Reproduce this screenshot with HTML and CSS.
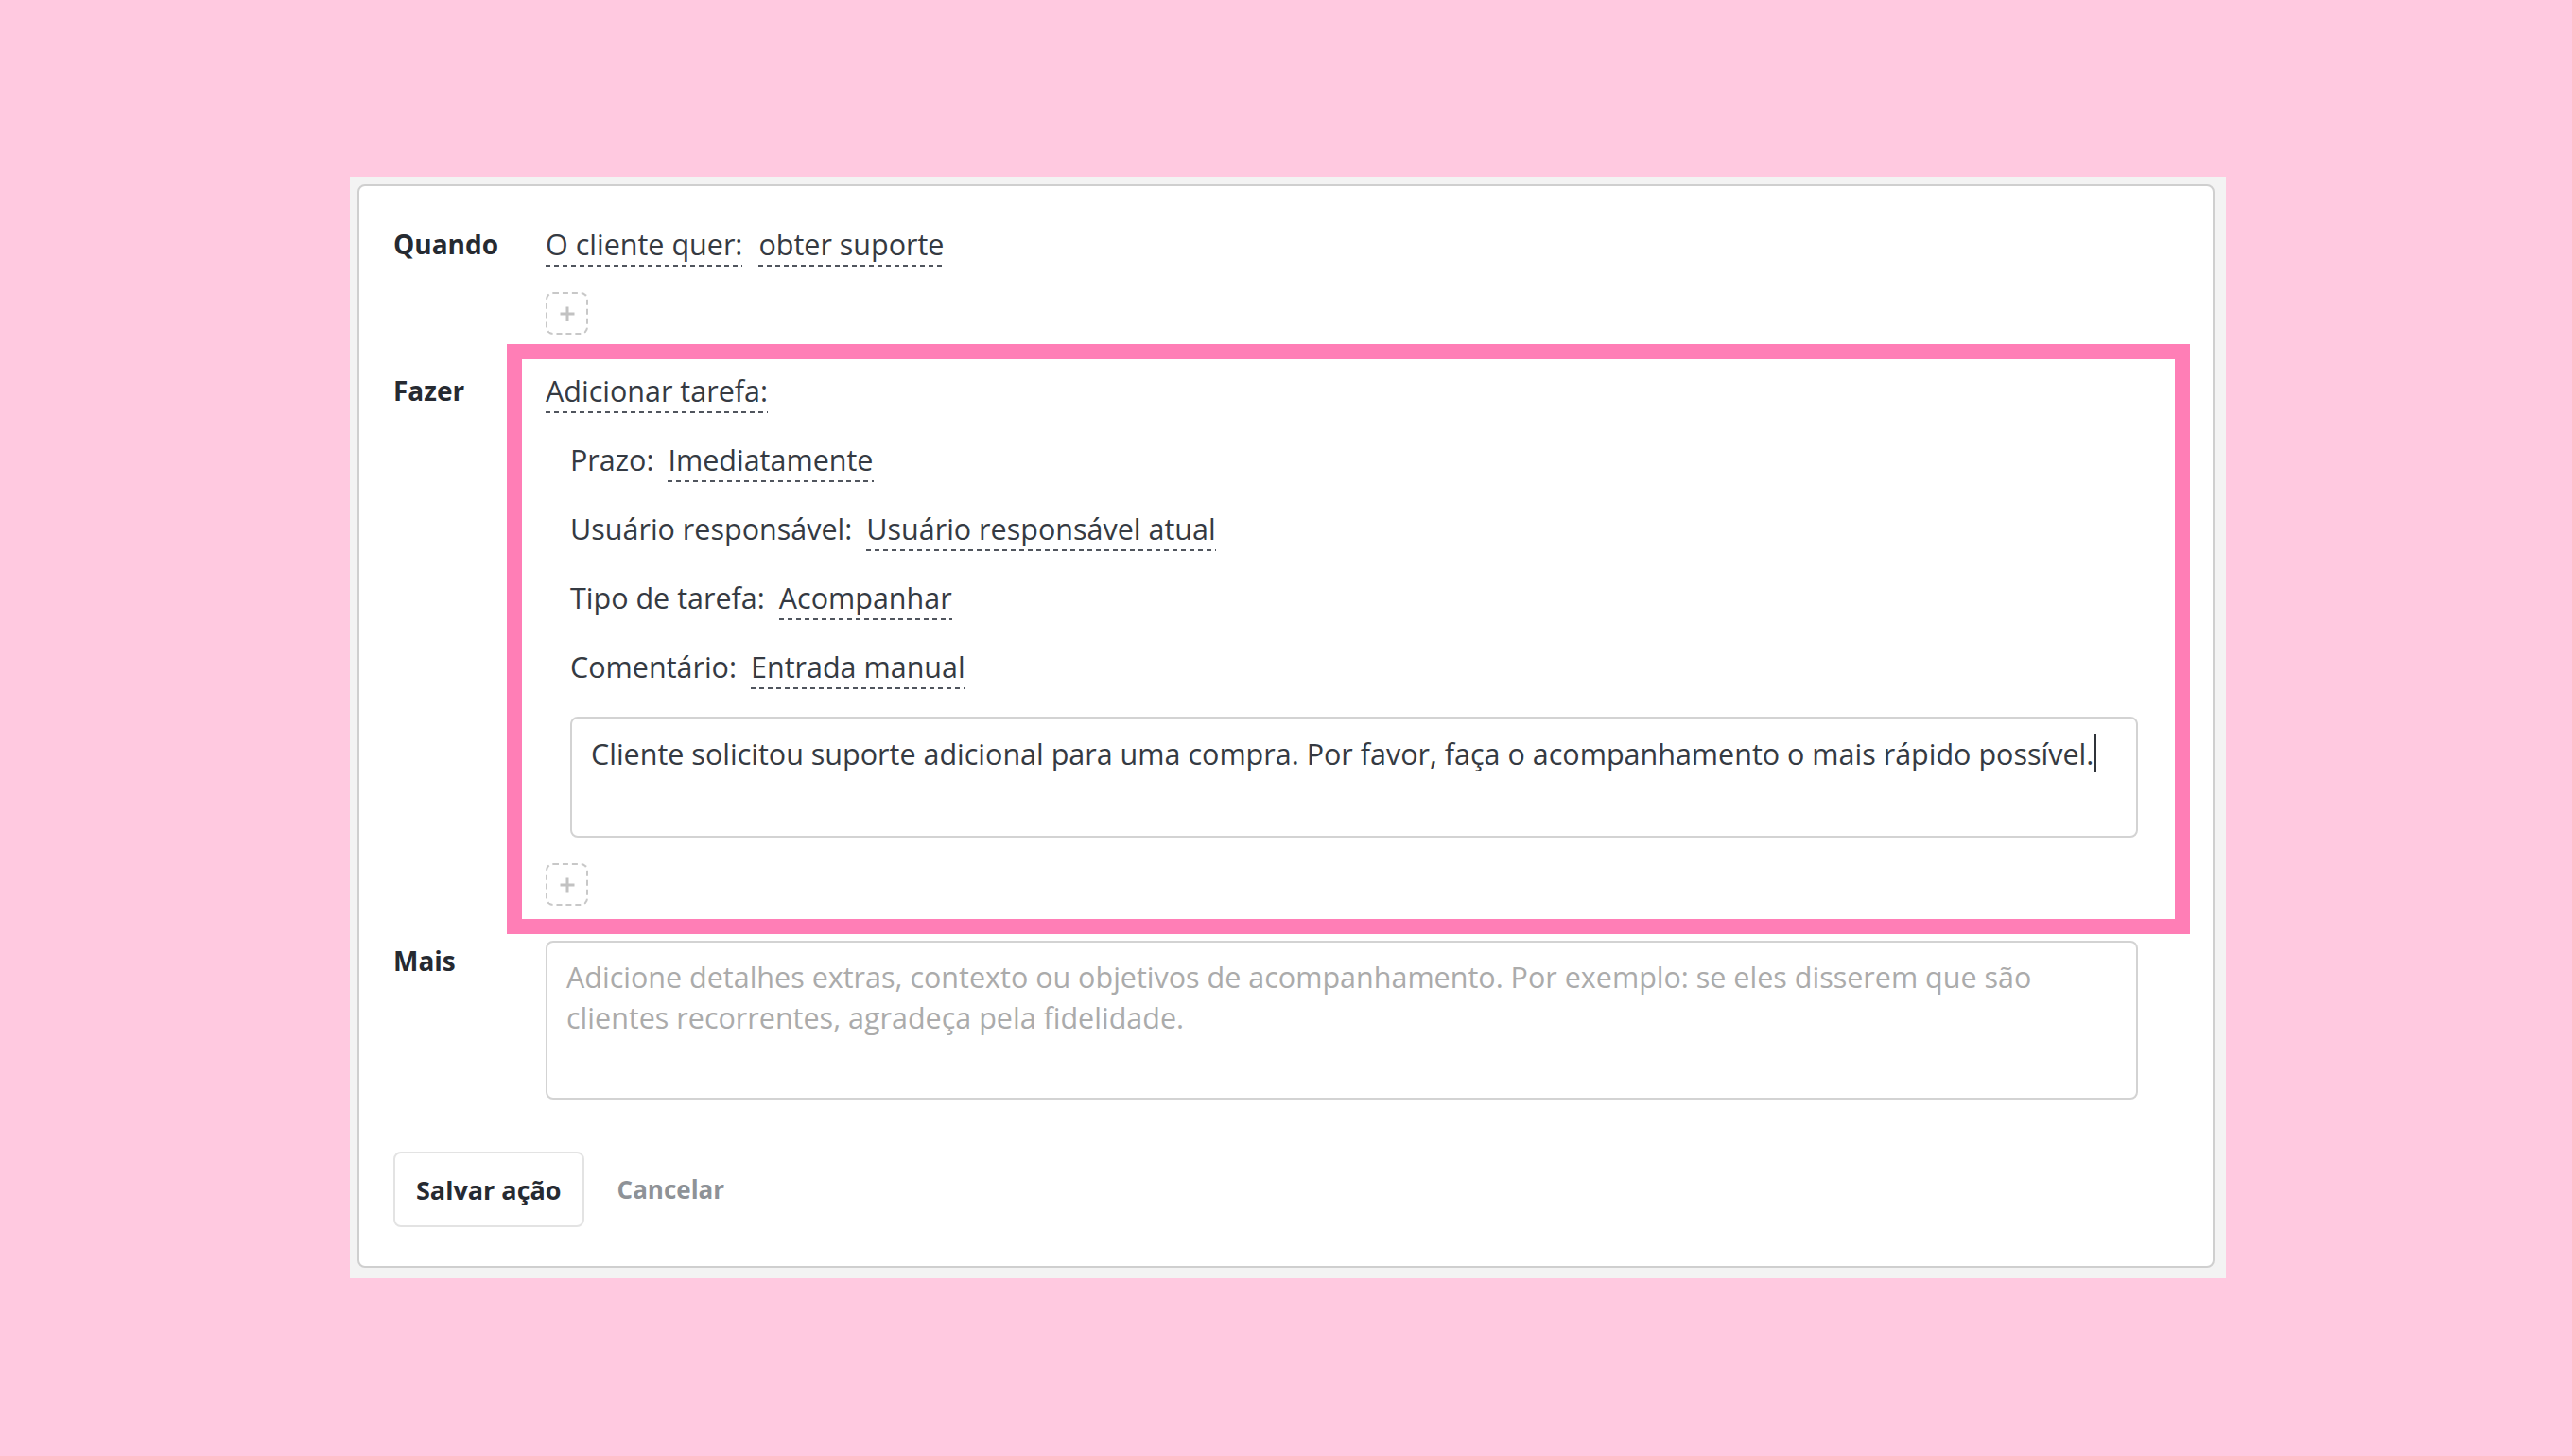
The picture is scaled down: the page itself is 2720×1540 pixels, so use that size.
FILE: index.html
```html
<!DOCTYPE html>
<html lang="pt-BR">
<head>
<meta charset="utf-8">
<title>Regra de ação</title>
<link rel="stylesheet" href="styles.css">
</head>
<body>
<div class="frame">
  <div class="card">
    <div class="rule">
      <div class="label">Quando</div>
      <div class="content">
        <div class="line"><span class="link">O cliente quer:</span><span class="link next">obter suporte</span></div>
        <button class="add" type="button" aria-label="Adicionar condição">
          <svg viewBox="0 0 18 18" width="18" height="18"><path d="M9 1.5v15M1.5 9h15" stroke="#c2c2c2" stroke-width="3" fill="none"/></svg>
        </button>
      </div>
    </div>

    <div class="rule rule-do">
      <div class="label label-do">Fazer</div>
      <div class="content">
        <div class="highlight">
          <div class="line"><span class="link">Adicionar tarefa:</span></div>
          <div class="params">
            <div class="line">Prazo:<span class="link value">Imediatamente</span></div>
            <div class="line">Usuário responsável:<span class="link value">Usuário responsável atual</span></div>
            <div class="line">Tipo de tarefa:<span class="link value">Acompanhar</span></div>
            <div class="line">Comentário:<span class="link value">Entrada manual</span></div>
            <div class="textbox">Cliente solicitou suporte adicional para uma compra. Por favor, faça o acompanhamento o mais rápido possível.<span class="caret"></span></div>
          </div>
          <button class="add" type="button" aria-label="Adicionar ação">
            <svg viewBox="0 0 18 18" width="18" height="18"><path d="M9 1.5v15M1.5 9h15" stroke="#c2c2c2" stroke-width="3" fill="none"/></svg>
          </button>
        </div>
      </div>
    </div>

    <div class="rule rule-more">
      <div class="label">Mais</div>
      <div class="content">
        <textarea class="more" placeholder="Adicione detalhes extras, contexto ou objetivos de acompanhamento. Por exemplo: se eles disserem que são&#10;clientes recorrentes, agradeça pela fidelidade."></textarea>
      </div>
    </div>

    <div class="actions">
      <button class="btn-save" type="button">Salvar ação</button>
      <button class="btn-cancel" type="button">Cancelar</button>
    </div>
  </div>
</div>
</body>
</html>
```

FILE: styles.css
```css
html, body {
  margin: 0;
  padding: 0;
}

body {
  background: #ffc9e0;
  font-family: "Open Sans", "Noto Sans", sans-serif;
  color: #353a42;
  min-height: 1540px;
}

.frame {
  margin: 187px 0 0 370px;
  width: 1984px;
  box-sizing: border-box;
  padding: 8px 12px 11px 8px;
  background: #f3f3f3;
}

.card {
  background: #fff;
  border: 2px solid #cfcfcf;
  border-radius: 8px;
  padding: 40px 0 41px 36px;
}

.rule {
  display: grid;
  grid-template-columns: 161px 1684px;
  align-items: start;
}

.rule-do {
  margin-top: 10px;
}

.rule-more {
  margin-top: 7px;
}

.label {
  font-size: 28px;
  line-height: 43px;
  font-weight: 700;
  color: #262a31;
}

.label-do {
  margin-top: 28px;
}

.content {
  display: flex;
  flex-direction: column;
  align-items: flex-start;
}

.line {
  font-size: 30.5px;
  line-height: 43px;
  white-space: nowrap;
}

.link {
  display: inline-block;
  padding-bottom: 2px;
  background-image: linear-gradient(to right, #50555d 0 5px, transparent 5px 9px);
  background-size: 9px 2px;
  background-repeat: repeat-x;
  background-position: left bottom;
}

.link.next {
  margin-left: 17px;
}

.link.value {
  margin-left: 15px;
}

.add {
  margin-top: 27px;
  width: 45px;
  height: 45px;
  box-sizing: border-box;
  border: 2px dashed #c8c8c8;
  border-radius: 8px;
  background: #fff;
  padding: 0;
  display: flex;
  align-items: center;
  justify-content: center;
}

.highlight {
  align-self: stretch;
  margin: 0 -55px 0 -41px;
  border: 16px solid #ff7eb6;
  padding: 12px 39px 14px 25px;
  display: flex;
  flex-direction: column;
  align-items: flex-start;
}

.params {
  margin-top: 28px;
  margin-left: 26px;
  align-self: stretch;
  display: flex;
  flex-direction: column;
  align-items: flex-start;
  gap: 28px;
}

.textbox {
  margin-top: 1px;
  align-self: stretch;
  height: 128px;
  box-sizing: border-box;
  border: 2px solid #d3d3d3;
  border-radius: 8px;
  padding: 16px 20px;
  font-size: 30.5px;
  line-height: 43px;
  color: #353a42;
}

.caret {
  display: inline-block;
  width: 2px;
  height: 41px;
  background: #30343a;
  vertical-align: top;
  margin-left: 1px;
}

.more {
  display: block;
  width: 100%;
  height: 168px;
  box-sizing: border-box;
  border: 2px solid #d3d3d3;
  border-radius: 8px;
  padding: 15px 20px;
  margin: 0;
  font-family: "Open Sans", "Noto Sans", sans-serif;
  font-size: 30.5px;
  line-height: 43px;
  color: #353a42;
  resize: none;
  overflow: hidden;
  outline: none;
}

.more::placeholder {
  color: #ababab;
  opacity: 1;
}

.actions {
  margin-top: 55px;
  display: flex;
  align-items: center;
}

.btn-save,
.btn-cancel {
  font-family: "Open Sans", "Noto Sans", sans-serif;
  font-weight: 700;
  margin: 0;
}

.btn-save {
  font-size: 27px;
  height: 80px;
  padding: 0 22px;
  border: 2px solid #e3e3e3;
  border-radius: 8px;
  background: #fff;
  color: #262a31;
}

.btn-cancel {
  font-size: 26px;
  margin-left: 35px;
  padding: 0;
  border: none;
  background: none;
  color: #8e9297;
}
```
